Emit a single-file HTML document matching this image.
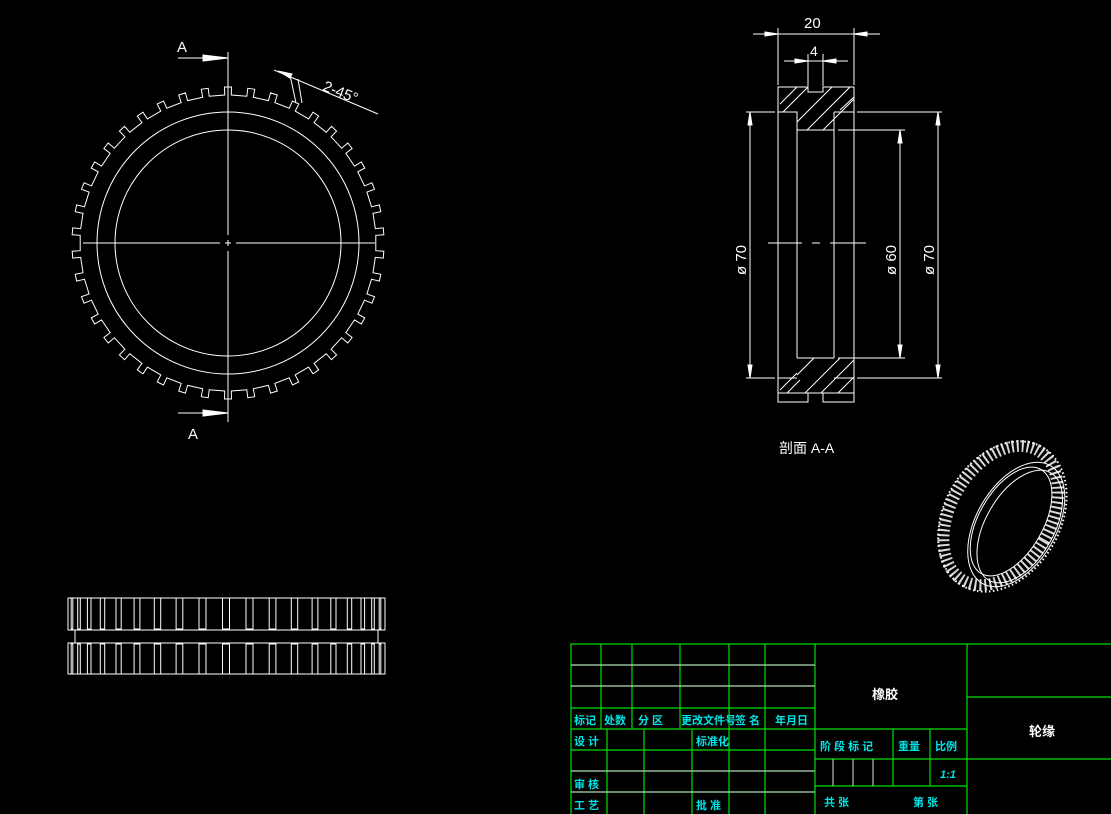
<!DOCTYPE html>
<html><head><meta charset="utf-8"><style>
html,body{margin:0;padding:0;background:#000;width:1111px;height:814px;overflow:hidden}
svg{display:block}
text{font-family:"Liberation Sans","Noto Sans CJK SC",sans-serif}
.c{fill:#00e5e5;font-size:11px;font-weight:bold}
.w{fill:#fff}
</style></head><body>
<svg id="s" width="1111" height="814" viewBox="0 0 1111 814" xmlns="http://www.w3.org/2000/svg">
<g id="g" stroke="#fff" stroke-width="1" fill="none">
<circle cx="228" cy="243" r="131"/>
<circle cx="228" cy="243" r="113"/>
<path id="gear"/>
<line x1="228" y1="52" x2="228" y2="235"/><line x1="228" y1="240" x2="228" y2="246"/><line x1="228" y1="251" x2="228" y2="422"/>
<line x1="83" y1="243" x2="220" y2="243"/><line x1="225" y1="243" x2="231" y2="243"/><line x1="236" y1="243" x2="375" y2="243"/>
<line x1="178" y1="58" x2="228" y2="58"/><path d="M203 55 L228 58 L203 61 Z" fill="#fff"/>
<line x1="178" y1="413" x2="228" y2="413"/><path d="M203 410 L228 413 L203 416 Z" fill="#fff"/>
<line x1="274" y1="70" x2="378" y2="114"/><line x1="290" y1="75" x2="296" y2="103"/><line x1="298" y1="79" x2="302" y2="103"/>
<path d="M278 71 L290 78 L292 74Z" fill="#fff"/>
<path d="M778 87 H808 V92 H823 V87 H854 V402 H823 V393 H808 V402 H778 Z"/>
<line x1="778" y1="393" x2="854" y2="393"/>
<path d="M778 112 H797 V358 M797 130 H834 M834 112 H854 M834 112 V358 M797 358 H834 M778 378 H797 M834 378 H854"/>
<line x1="797" y1="112" x2="797" y2="130"/>
<path d="M780 104 L797 87 M783 112 L808 87 M797 122 L832 87 M807 130 L850 87 M823 130 L854 99 M840 110 L854 97"/>
<path d="M797 375 L814 358 M805 393 L840 358 M821 393 L854 360 M838 393 L854 377 M780 390 L797 373 M787 393 L800 380"/>
<line x1="768" y1="243" x2="802" y2="243"/><line x1="812" y1="243" x2="820" y2="243"/><line x1="830" y1="243" x2="866" y2="243"/>
<path d="M778 85 V28 M854 85 V28 M753 34 H880"/>
<path d="M778 34 L765 32 V36Z M854 34 L867 32 V36Z" fill="#fff"/>
<path d="M808 86 V54 M823 86 V54 M784 61 H848"/>
<path d="M808 61 L795 59 V63Z M823 61 L836 59 V63Z" fill="#fff"/>
<path d="M746 112 H775 M746 378 H775 M750 112 V378"/>
<path d="M750 112 L748 125 H752Z M750 378 L748 365 H752Z" fill="#fff"/>
<path d="M838 130 H905 M838 358 H905 M900 130 V358"/>
<path d="M900 130 L898 143 H902Z M900 358 L898 345 H902Z" fill="#fff"/>
<path d="M857 112 H942 M857 378 H942 M938 112 V378"/>
<path d="M938 112 L936 125 H940Z M938 378 L936 365 H940Z" fill="#fff"/>
<path id="side"/>
<rect x="68" y="598" width="317" height="32"/>
<rect x="68" y="643" width="317" height="31"/>
<line x1="75" y1="630" x2="75" y2="643"/><line x1="378" y1="630" x2="378" y2="643"/>
<g transform="rotate(30 1005 518)">
<ellipse cx="1002" cy="518" rx="58" ry="80" stroke-dasharray="1.5 2.5" stroke-width="2"/>
<ellipse cx="1000" cy="518" rx="50" ry="75" stroke-dasharray="2 3" stroke-width="12" stroke-opacity="0.85"/>
<ellipse cx="1018" cy="518" rx="40" ry="68"/>
<ellipse cx="1022" cy="518" rx="34" ry="62"/>
<ellipse cx="1012" cy="518" rx="32" ry="60"/>
</g>
</g>
<text x="177" y="52" class="w" font-size="15">A</text>
<text x="188" y="439" class="w" font-size="15">A</text>
<text x="322" y="90" class="w" font-size="15" transform="rotate(22 322 90)">2-45°</text>
<text x="804" y="28" class="w" font-size="15">20</text>
<text x="810" y="56" class="w" font-size="14">4</text>
<text class="w" font-size="15" transform="translate(746 275) rotate(-90)">ø 70</text>
<text class="w" font-size="15" transform="translate(896 275) rotate(-90)">ø 60</text>
<text class="w" font-size="15" transform="translate(934 275) rotate(-90)">ø 70</text>
<text x="779" y="453" class="w" font-size="14">剖面 A-A</text>
<g stroke="#00e000" stroke-width="1.2" fill="none">
<rect x="571" y="644" width="545" height="175"/>
<path d="M571 665 H815 M571 686 H815 M571 708 H815 M571 729 H967 M571 750 H815 M571 771 H815 M571 792 H815"/>
<path d="M601 644 V729 M632 644 V729 M680 644 V729 M729 644 V814 M765 644 V814 M815 644 V814 M967 644 V814"/>
<path d="M607 729 V814 M644 729 V814 M692 729 V814"/>
<path d="M967 697 H1111 M967 759 H1111 M815 759 H967 M815 786 H967 M893 729 V786 M930 729 V786"/>
</g>
<path d="M571 665 H815 M571 686 H815 M571 771 H815 M571 792 H815 M833 759 V786 M853 759 V786 M873 759 V786" stroke="#ddd" stroke-width="1"/>
<text x="574" y="724" class="c">标记</text><text x="604" y="724" class="c">处数</text><text x="638" y="724" class="c">分 区</text>
<text x="681" y="724" class="c" font-size="9.5">更改文件号</text><text x="735" y="724" class="c">签 名</text><text x="775" y="724" class="c">年月日</text>
<text x="574" y="745" class="c">设 计</text><text x="696" y="745" class="c">标准化</text>
<text x="574" y="788" class="c">审 核</text><text x="574" y="809" class="c">工 艺</text><text x="696" y="809" class="c">批 准</text>
<text x="820" y="750" class="c">阶 段 标 记</text><text x="898" y="750" class="c">重量</text><text x="935" y="750" class="c">比例</text>
<text x="940" y="778" class="c" font-style="italic">1:1</text>
<text x="824" y="806" class="c">共 张</text><text x="913" y="806" class="c">第 张</text>
<text x="872" y="699" class="w" font-size="13" font-weight="bold">橡胶</text>
<text x="1029" y="736" class="w" font-size="13" font-weight="bold">轮缘</text>
</svg>
<script>
(function(){
var cx=228,cy=243,N=42,ro=156,ri=148,d="",h=0.3;
function p(r,a){return (cx+r*Math.sin(a)).toFixed(1)+" "+(cy-r*Math.cos(a)).toFixed(1);}
for(var i=0;i<N;i++){
 var a0=i*2*Math.PI/N;
 var t0=a0-Math.PI/N*h,t1=a0+Math.PI/N*h;
 d+=(i==0?"M":"L")+p(ri,t0)+" L"+p(ro,t0)+" L"+p(ro,t1)+" L"+p(ri,t1)+" L"+p(ri,a0+2*Math.PI/N-Math.PI/N*h);
}
d+="Z";
document.getElementById("gear").setAttribute("d",d);
var s="";
for(var i=0;i<N;i++){
 var a=i*2*Math.PI/N;
 if(Math.cos(a)<0)continue;
 var xa=226+158*Math.sin(a-Math.PI/N*h),xb=226+158*Math.sin(a+Math.PI/N*h);
 if(Math.abs(xb-xa)<1)continue;
 s+="M"+xa.toFixed(1)+" 598 V629 H"+xb.toFixed(1)+" V598 M"+xa.toFixed(1)+" 674 V644 H"+xb.toFixed(1)+" V674 ";
}
document.getElementById("side").setAttribute("d",s);
})();
</script>
</body></html>
